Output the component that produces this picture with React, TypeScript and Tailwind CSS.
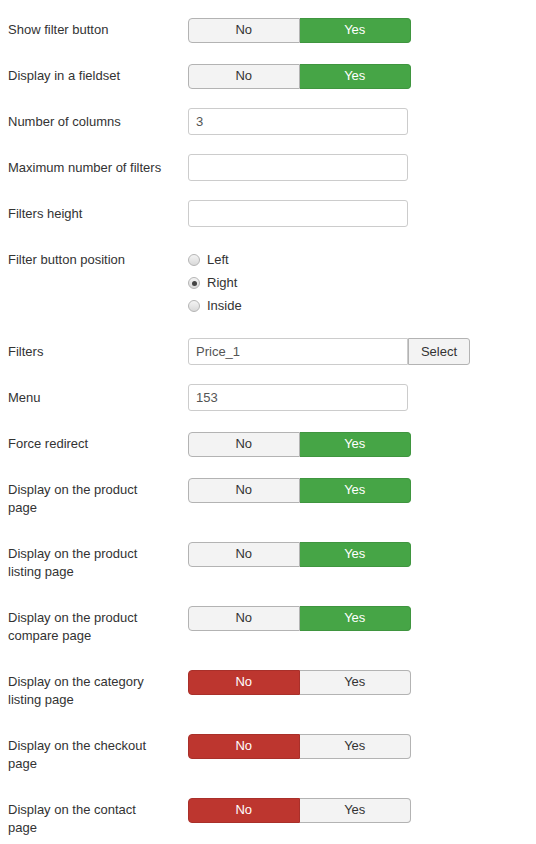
const font = { fontFamily: '"Liberation Sans", Arial, sans-serif' };

type Row =
  | { label: string[]; kind: "toggle"; value: "yes" | "no" }
  | { label: string[]; kind: "input"; value: string }
  | { label: string[]; kind: "radio"; options: string[]; checked: number }
  | { label: string[]; kind: "select"; value: string };

const rows: Row[] = [
  { label: ["Show filter button"], kind: "toggle", value: "yes" },
  { label: ["Display in a fieldset"], kind: "toggle", value: "yes" },
  { label: ["Number of columns"], kind: "input", value: "3" },
  { label: ["Maximum number of filters"], kind: "input", value: "" },
  { label: ["Filters height"], kind: "input", value: "" },
  { label: ["Filter button position"], kind: "radio", options: ["Left", "Right", "Inside"], checked: 1 },
  { label: ["Filters"], kind: "select", value: "Price_1" },
  { label: ["Menu"], kind: "input", value: "153" },
  { label: ["Force redirect"], kind: "toggle", value: "yes" },
  { label: ["Display on the product", "page"], kind: "toggle", value: "yes" },
  { label: ["Display on the product", "listing page"], kind: "toggle", value: "yes" },
  { label: ["Display on the product", "compare page"], kind: "toggle", value: "yes" },
  { label: ["Display on the category", "listing page"], kind: "toggle", value: "no" },
  { label: ["Display on the checkout", "page"], kind: "toggle", value: "no" },
  { label: ["Display on the contact", "page"], kind: "toggle", value: "no" },
];

const Toggle = ({ value }: { value: "yes" | "no" }) => (
  <div className="mt-[2px] flex h-[25px] w-[223px] text-[13px] leading-[21px]">
    <span
      className={
        value === "no"
          ? "w-1/2 rounded-l-[4px] border border-[#a9302a] bg-[#bd362f] text-center text-white"
          : "w-1/2 rounded-l-[4px] border border-[#b3b3b3] bg-[#f3f3f3] text-center text-[#333]"
      }
    >
      No
    </span>
    <span
      className={
        value === "yes"
          ? "w-1/2 rounded-r-[4px] border border-l-0 border-[#3f953f] bg-[#46a546] text-center text-white"
          : "w-1/2 rounded-r-[4px] border border-l-0 border-[#b3b3b3] bg-[#f3f3f3] text-center text-[#333]"
      }
    >
      Yes
    </span>
  </div>
);

const TextInput = ({ value, square }: { value: string; square?: boolean }) => (
  <div
    className={
      square
        ? "h-[27px] w-[220px] rounded-l-[3px] border border-[#ccc] bg-white px-[7px] text-[13px] leading-[25px] text-[#555]"
        : "h-[27px] w-[220px] rounded-[3px] border border-[#ccc] bg-white px-[7px] text-[13px] leading-[25px] text-[#555]"
    }
  >
    {value}
  </div>
);

const Radio = ({ label, checked }: { label: string; checked: boolean }) => (
  <div className="flex h-[23px] items-center gap-[7px] pt-[3px] text-[13px] text-[#333]">
    <span className="flex h-[12px] w-[12px] items-center justify-center rounded-full border border-[#b5b5b5] bg-gradient-to-b from-[#f4f4f4] to-[#d9d9d9]">
      {checked && <span className="h-[5px] w-[5px] rounded-full bg-[#444]" />}
    </span>
    <span>{label}</span>
  </div>
);

const rowHeight = (r: Row) => {
  if (r.kind === "radio") return "h-[92px]";
  if (r.label.length > 1) return "h-[64px]";
  return "h-[46px]";
};

export default function App() {
  return (
    <div className="min-h-screen bg-white pl-[8px] pt-[16px]" style={font}>
      {rows.map((r, i) => (
        <div key={i} className={`flex items-start ${rowHeight(r)}`}>
          <div className="w-[180px] pt-[5px] text-[13px] leading-[18px] text-[#333]">
            {r.label.map((l, j) => (
              <div key={j}>{l}</div>
            ))}
          </div>
          {r.kind === "toggle" && <Toggle value={r.value} />}
          {r.kind === "input" && <TextInput value={r.value} />}
          {r.kind === "radio" && (
            <div className="mt-[1px] flex flex-col">
              {r.options.map((o, j) => (
                <Radio key={o} label={o} checked={j === r.checked} />
              ))}
            </div>
          )}
          {r.kind === "select" && (
            <div className="flex">
              <TextInput value={r.value} square />
              <button className="h-[27px] w-[62px] rounded-r-[3px] border border-[#b3b3b3] bg-[#f3f3f3] text-[13px] text-[#333]">
                Select
              </button>
            </div>
          )}
        </div>
      ))}
    </div>
  );
}
